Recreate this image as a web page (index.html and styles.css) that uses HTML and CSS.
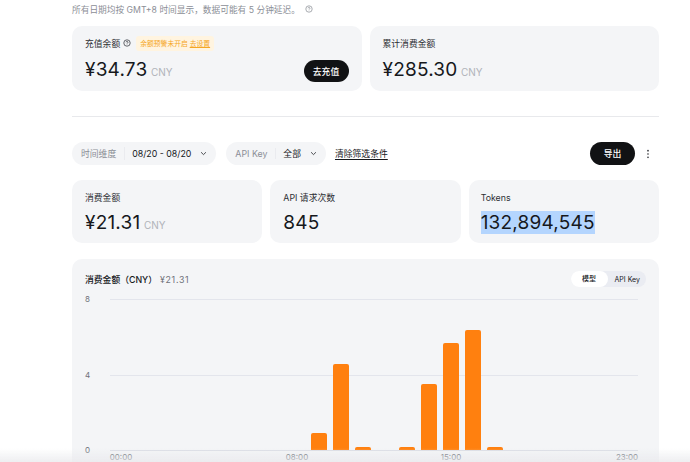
FILE: index.html
```html
<!DOCTYPE html>
<html>
  <head>
    <meta charset="UTF-8">
    <title>费用</title>
    <link rel="stylesheet" href="styles.css">
  </head>
  <body>
    <div class="page">
      <p class="note">
        所有日期均按 GMT+8 时间显示，数据可能有 5 分钟延迟。
        <svg class="help" viewBox="0 0 12 12"><circle cx="6" cy="6" r="4.8"/><path d="M4.6 4.9a1.4 1.4 0 1 1 2.1 1.2c-.5.3-.7.5-.7 1"/><path d="M6 8.3v.5"/></svg>
      </p>

      <div class="balance-row">
        <div class="card balance">
          <div class="card-label">
            充值余额
            <svg class="help help-dark" viewBox="0 0 12 12"><circle cx="6" cy="6" r="4.8"/><path d="M4.6 4.9a1.4 1.4 0 1 1 2.1 1.2c-.5.3-.7.5-.7 1"/><path d="M6 8.3v.5"/></svg>
            <span class="warn">余额预警未开启 <u>去设置</u></span>
          </div>
          <div class="balance-bottom">
            <div class="amount">¥34.73 <span class="unit">CNY</span></div>
            <button class="btn-dark">去充值</button>
          </div>
        </div>
        <div class="card balance">
          <div class="card-label">累计消费金额</div>
          <div class="balance-bottom">
            <div class="amount">¥285.30 <span class="unit">CNY</span></div>
          </div>
        </div>
      </div>

      <hr class="divider">

      <div class="toolbar">
        <div class="filter">
          <span class="filter-name">时间维度</span>
          <span class="filter-value">08/20 - 08/20</span>
          <svg class="chevron" viewBox="0 0 10 6"><path d="M1.5 1.2 5 4.6l3.5-3.4"/></svg>
        </div>
        <div class="filter">
          <span class="filter-name">API Key</span>
          <span class="filter-value">全部</span>
          <svg class="chevron" viewBox="0 0 10 6"><path d="M1.5 1.2 5 4.6l3.5-3.4"/></svg>
        </div>
        <a class="clear">清除筛选条件</a>
        <button class="btn-dark btn-export">导出</button>
        <svg class="more" viewBox="0 0 4 12"><circle cx="2" cy="2" r="1"/><circle cx="2" cy="6" r="1"/><circle cx="2" cy="10" r="1"/></svg>
      </div>

      <div class="stats-row">
        <div class="card stat">
          <div class="card-label">消费金额</div>
          <div class="amount">¥21.31 <span class="unit">CNY</span></div>
        </div>
        <div class="card stat">
          <div class="card-label">API 请求次数</div>
          <div class="amount">845</div>
        </div>
        <div class="card stat">
          <div class="card-label">Tokens</div>
          <div class="amount"><span class="selected">132,894,545</span></div>
        </div>
      </div>

      <div class="card chart">
        <div class="chart-head">
          <span class="chart-title">消费金额（CNY）</span>
          <span class="chart-total">¥21.31</span>
          <div class="switch">
            <span class="switch-on">模型</span>
            <span class="switch-off">API Key</span>
          </div>
        </div>
        <div class="chart-body">
          <div class="y-axis">
            <span>8</span>
            <span>4</span>
            <span>0</span>
          </div>
          <div class="plot">
            <div class="grid-lines">
              <i></i>
              <i></i>
              <i></i>
            </div>
            <div class="bars">
              <div class="bar" style="grid-column: 10; height: 17px"></div>
              <div class="bar" style="grid-column: 11; height: 86px"></div>
              <div class="bar" style="grid-column: 12; height: 3px"></div>
              <div class="bar" style="grid-column: 14; height: 3px"></div>
              <div class="bar" style="grid-column: 15; height: 66px"></div>
              <div class="bar" style="grid-column: 16; height: 107px"></div>
              <div class="bar" style="grid-column: 17; height: 120px"></div>
              <div class="bar" style="grid-column: 18; height: 3px"></div>
            </div>
            <div class="x-axis">
              <span style="grid-column: 1">00:00</span>
              <span style="grid-column: 9">08:00</span>
              <span style="grid-column: 16">15:00</span>
              <span style="grid-column: 24">23:00</span>
            </div>
          </div>
        </div>
      </div>
    </div>
    <div class="bottom-fade"></div>
  </body>
</html>
```

FILE: styles.css
```css
:root {
  --card-bg: #f4f5f7;
  --text-color: #16181c;
  --muted: #8b8e96;
  --line: #e3e5ec;
  --orange: #ff800f;
}

html,
body {
  height: 100%;
  overflow: hidden;
}

body {
  margin: 0;
  background: #ffffff;
  color: var(--text-color);
  font-family: Inter, "Noto Sans CJK SC", sans-serif;
}

.page {
  width: 587px;
  margin-left: 72px;
}

.note {
  display: flex;
  align-items: center;
  gap: 5px;
  height: 18px;
  margin: 0 0 8px;
  font-size: 8.7px;
  color: var(--muted);
}

.help {
  width: 8px;
  height: 8px;
  fill: none;
  stroke: currentColor;
  stroke-width: 1.1;
  flex: none;
}

.help-dark {
  color: #30333a;
}

.card {
  background: var(--card-bg);
  border-radius: 10px;
  box-sizing: border-box;
}

.balance-row {
  display: flex;
  gap: 8px;
}

.balance {
  flex: 1;
  height: 65px;
  padding: 9px 13px 0;
}

.card-label {
  display: flex;
  align-items: center;
  gap: 3px;
  height: 16px;
  font-size: 8.8px;
  color: #2c2e33;
}

.warn {
  margin-left: 2px;
  padding: 0 4px;
  height: 15px;
  line-height: 15px;
  font-size: 6.8px;
  border-radius: 3px;
  background: #fff4e0;
  color: #f5a623;
}

.balance-bottom {
  display: flex;
  align-items: center;
  justify-content: space-between;
  margin-top: 6px;
}

.amount {
  font-size: 19px;
  line-height: 26px;
  letter-spacing: 0.2px;
  white-space: nowrap;
}

.unit {
  margin-left: -2px;
  font-size: 10px;
  letter-spacing: 0;
  color: #b0b3b9;
}

.btn-dark {
  width: 45px;
  height: 22px;
  padding: 0;
  border: 0;
  border-radius: 11px;
  background: #111214;
  color: #ffffff;
  font-family: inherit;
  font-size: 8.8px;
  font-weight: 500;
}

.divider {
  height: 1px;
  margin: 25px 0 25px;
  border: 0;
  background: #e8e9ec;
}

.toolbar {
  display: flex;
  align-items: center;
  gap: 10px;
}

.filter {
  display: flex;
  align-items: center;
  height: 23px;
  padding: 0 9px;
  border-radius: 12px;
  background: var(--card-bg);
  font-size: 8.8px;
}

.filter-name {
  padding-right: 7.5px;
  margin-right: 7.5px;
  border-right: 1px solid #eaebef;
  color: var(--muted);
}

.chevron {
  width: 7px;
  height: 5px;
  margin-left: 9px;
  fill: none;
  stroke: #2c2e33;
  stroke-width: 1.2;
}

.clear {
  margin-left: -1px;
  font-size: 8.8px;
  text-decoration: underline;
  text-underline-offset: 2px;
}

.btn-export {
  height: 23px;
  border-radius: 12px;
  margin-left: auto;
}

.more {
  width: 4px;
  height: 10px;
  margin: 0 9px 0 1px;
  fill: #2c2e33;
}

.stats-row {
  display: grid;
  grid-template-columns: repeat(3, 1fr);
  gap: 8px;
  margin-top: 15px;
}

.stat {
  height: 63px;
  padding: 9px 12px 0 13px;
}

.stat:last-child {
  padding-left: 12px;
}

.stat .amount {
  margin-top: 5px;
}

.selected {
  background: #b4d5fe;
}

.chart {
  height: 260px;
  margin-top: 16px;
  padding: 12px 13px 0;
}

.chart-head {
  display: flex;
  align-items: center;
  height: 16px;
}

.chart-title {
  font-size: 8.8px;
  font-weight: 500;
}

.chart-total {
  margin-left: 3px;
  font-size: 8.8px;
  letter-spacing: 0.7px;
  color: #6e7179;
}

.switch {
  display: flex;
  align-items: center;
  height: 16px;
  margin-left: auto;
  border-radius: 8px;
  background: #eaecf2;
  font-size: 7px;
}

.switch-on {
  width: 37px;
  line-height: 16px;
  text-align: center;
  border-radius: 8px;
  background: #ffffff;
  font-weight: 500;
}

.switch-off {
  padding: 0 6px 0 7px;
}

.chart-body {
  display: flex;
  margin-top: 12px;
}

.y-axis {
  display: flex;
  flex-direction: column;
  justify-content: space-between;
  width: 25px;
  height: 163px;
  margin-top: -6px;
  font-size: 8px;
  line-height: 12px;
  color: #6e7179;
}

.plot {
  position: relative;
  width: 528px;
}

.grid-lines {
  position: absolute;
  top: 0;
  left: 0;
  right: 0;
  height: 152px;
  display: flex;
  flex-direction: column;
  justify-content: space-between;
}

.grid-lines i {
  height: 1px;
  background: var(--line);
}

.grid-lines i:last-child {
  background: #dcdee6;
}

.bars,
.x-axis {
  display: grid;
  grid-template-columns: repeat(24, 22px);
}

.bars {
  position: relative;
  height: 151px;
  align-items: end;
  grid-template-rows: 151px;
}

.bar {
  grid-row: 1;
  margin: 0 3px;
  border-radius: 2px 2px 0 0;
  background: var(--orange);
}

.x-axis {
  margin-top: 3px;
  font-size: 8px;
  line-height: 8px;
  color: #666a72;
}

.x-axis span {
  justify-self: center;
  white-space: nowrap;
}

.bottom-fade {
  position: fixed;
  left: 0;
  right: 0;
  bottom: 0;
  height: 14px;
  background: linear-gradient(to bottom, rgba(232, 233, 236, 0), rgba(232, 233, 236, 0.75));
}
```
